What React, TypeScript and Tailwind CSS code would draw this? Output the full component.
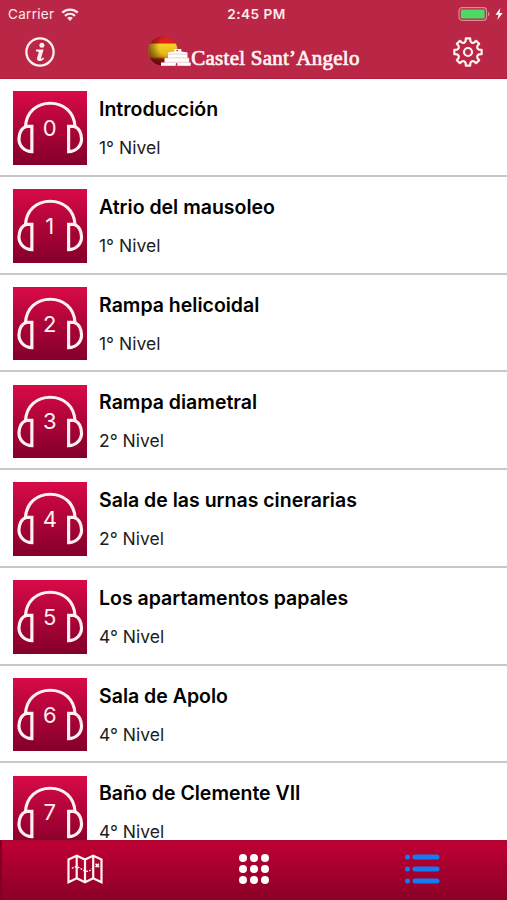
const stops = [
  { title: 'Introducción', level: '1° Nivel' },
  { title: 'Atrio del mausoleo', level: '1° Nivel' },
  { title: 'Rampa helicoidal', level: '1° Nivel' },
  { title: 'Rampa diametral', level: '2° Nivel' },
  { title: 'Sala de las urnas cinerarias', level: '2° Nivel' },
  { title: 'Los apartamentos papales', level: '4° Nivel' },
  { title: 'Sala de Apolo', level: '4° Nivel' },
  { title: 'Baño de Clemente VII', level: '4° Nivel' },
];

// Eight-toothed gear outline, centred on 16,16
function gearPath() {
  const point = (radius: number, degrees: number) => {
    const a = (degrees * Math.PI) / 180;
    return `${(16 + radius * Math.sin(a)).toFixed(2)} ${(16 - radius * Math.cos(a)).toFixed(2)}`;
  };
  let d = `M${point(13.8, -9)}`;
  for (let a = 0; a < 360; a += 45) {
    d += `L${point(13.8, a + 9)}L${point(11.4, a + 12)}Q${point(8.9, a + 22.5)} ${point(11.4, a + 33)}L${point(13.8, a + 36)}`;
  }
  return `${d}Z`;
}

function StatusBar() {
  return (
    <div className="grid h-7 grid-cols-3 items-center pl-2 pr-1 text-[13.5px] text-[#ffe9ec]">
      <div className="flex items-center gap-[7px]">
        <span className="tracking-[0.3px]">Carrier</span>
        <svg viewBox="0 0 18 13" className="h-[13px] w-[18px]" fill="none" stroke="currentColor" strokeWidth="2.3">
          <path d="M1.2 4.7C5.7.5 12.3.5 16.8 4.7" />
          <path d="M4 7.9c3-2.7 7-2.7 10 0" />
          <path d="M6.2 9.9c1.8-1.5 3.8-1.5 5.6 0L9 12.9z" fill="currentColor" stroke="none" />
        </svg>
      </div>
      <span className="pl-0.5 pt-px text-center text-[13.6px] font-semibold tracking-[0.5px]">2:45 PM</span>
      <div className="flex items-center justify-end gap-1">
        <svg viewBox="0 0 33 14" className="h-[14px] w-[33px]" fill="none">
          <rect x="1" y=".7" width="27.5" height="12.6" rx="3" stroke="#dc899a" strokeWidth="1.2" />
          <rect x="2.8" y="2.5" width="23.9" height="9" rx="1.2" fill="#4cd964" />
          <path d="M30 4.8c2 .8 2 3.6 0 4.4z" fill="#dc899a" />
        </svg>
        <svg viewBox="0 0 8 12" className="h-3 w-2" fill="#fff">
          <path d="M5.4 0 .5 6.7h3L2.4 12l5.2-7.1H4.5z" />
        </svg>
      </div>
    </div>
  );
}

function Logo() {
  return (
    <div className="flex items-center">
      <svg viewBox="0 0 44 34" className="h-[34px] w-11">
        <defs>
          <linearGradient id="flag" x1="0" y1="0" x2="0" y2="1">
            <stop offset="0" stopColor="#e3201f" />
            <stop offset=".23" stopColor="#d9251b" />
            <stop offset=".27" stopColor="#f7d128" />
            <stop offset=".7" stopColor="#e2b015" />
            <stop offset=".78" stopColor="#b91a12" />
            <stop offset="1" stopColor="#8d1010" />
          </linearGradient>
          <radialGradient id="shade" cx=".64" cy=".36" r=".7">
            <stop offset=".4" stopColor="#000" stopOpacity="0" />
            <stop offset="1" stopColor="#3c0805" stopOpacity=".65" />
          </radialGradient>
        </defs>
        <circle cx="15" cy="14.9" r="14.7" fill="url(#flag)" />
        <circle cx="15" cy="14.9" r="14.7" fill="url(#shade)" />
        <g fill="#fff">
          <path d="M13 26.5h29.700v3.300H13z" />
          <path d="M16.500 21.800h24.700V27H16.500z" />
          <path d="M20 16.500l6.500-1v-2.500h6.800v2.500l6.200 1V23H20z" />
        </g>
        <path d="M20 18.500c6-.8 13-.8 19.500 0M17 22.300c8-.7 16-.7 24 0M14 26.300h28" stroke="#dd9aa8" strokeWidth=".5" fill="none" />
        <path d="M27.800 29.800V28c0-1.300 1.600-1.300 1.600 0v1.800zM28.500 15.300v-1.200h1.500v1.200z" fill="#ba2746" />
      </svg>
      <span className="-ml-px mt-[9px] whitespace-nowrap font-['Liberation_Serif',serif] text-[21px] leading-6 tracking-[0.25px] text-[#fff3f3] [-webkit-text-stroke:0.7px_#fff3f3]">
        Castel Sant’Angelo
      </span>
    </div>
  );
}

function Header() {
  return (
    <header className="h-[79px] shrink-0 border-b border-[#b01b3b] bg-[#ba2746]">
      <StatusBar />
      <div className="flex h-[50px] items-center justify-between pl-6 pr-[23px]">
        <svg viewBox="0 0 32 32" className="mb-0.5 h-8 w-8" fill="none">
          <circle cx="16" cy="16" r="13.6" stroke="#fff0f0" strokeWidth="2.3" />
          <circle cx="17.9" cy="9.2" r="2.5" fill="#fff0f0" />
          <path
            d="M12 13.600h7.600l-2.500 8.500c-.3 1 .3 1 1 .2l1-.9 1.100 1c-2.600 3.600-8.300 3.800-7-.8l1.500-5.200c.2-.7-.3-1-2.700-1z"
            fill="#fff0f0"
          />
        </svg>
        <Logo />
        <svg
          viewBox="0 0 32 32"
          className="mb-0.5 h-8 w-8"
          fill="none"
          stroke="#fff0f0"
          strokeWidth="2.2"
          strokeLinejoin="round"
        >
          <circle cx="16" cy="16" r="4" />
          <path d={gearPath()} />
        </svg>
      </div>
    </header>
  );
}

function AudioTile({ number }: { number: number }) {
  return (
    <div className="grid h-[73.5px] w-[73.5px] shrink-0 place-items-center bg-linear-to-b from-[#d90b47] to-[#84002a]">
      <svg
        viewBox="0 0 74 74"
        className="col-start-1 row-start-1 h-full w-full"
        fill="none"
        stroke="#fff0f1"
        strokeWidth="3.2"
      >
        <path d="M12.500 36C13.500 21 24 12.300 37.500 12.300S61.500 21 62.500 36" />
        <path d="M19 35.700h-5.500C8.300 37 6 43 6 48.300c0 7 5.500 12.700 13 12.700z" />
        <path d="M56 35.700h5.500C66.700 37 69 43 69 48.300c0 7-5.500 12.700-13 12.700z" />
      </svg>
      <span className="col-start-1 row-start-1 text-[22px] leading-none text-[#ffeff1]">
        {number}
      </span>
    </div>
  );
}

function TabBar() {
  return (
    <nav className="grid h-[60px] shrink-0 grid-cols-3 items-center border-l-2 border-t border-l-[#820026] border-t-[#a10b32] bg-linear-to-b from-[#c00034] to-[#8b0027] pb-[3px]">
      <svg
        viewBox="0 0 36 30"
        className="mr-[3px] h-[30px] w-9 justify-self-center"
        fill="none"
        stroke="#fff3f4"
        strokeWidth="2.2"
      >
        <path d="M1.5 5.5 9.7 1.800 18 5.500l8.200-3.700 8.300 3.700v22.700l-8.300-4-8.200 4-8.300-4-8.200 4zM9.700 1.800v22.400M18 5.500v22.700M26.200 1.800v22.400" />
        <path d="M5 14.500c4-4 8 0 12 2s7 0 10-4" strokeWidth="1.400" strokeDasharray="1.800 1.300" />
        <path d="m28.600 9.700 3.400 3.400m0-3.400-3.400 3.400" strokeWidth="1.600" />
      </svg>
      <svg viewBox="0 0 30 30" className="h-[30px] w-[30px] justify-self-center" fill="#fff">
        {[4, 15, 26].map((y) =>
          [4, 15, 26].map((x) => <circle key={`${x}-${y}`} cx={x} cy={y} r="4" />)
        )}
      </svg>
      <svg
        viewBox="0 0 36 32"
        className="mr-0.5 h-8 w-9 justify-self-center"
        stroke="#147bf3"
        strokeWidth="5"
        strokeLinecap="round"
      >
        <path d="M3.500 4h.01M3.500 16h.01M3.500 28h.01M11 4h22M11 16h22M11 28h22" />
      </svg>
    </nav>
  );
}

export default function App() {
  return (
    <div className="flex h-[900px] w-[507px] flex-col overflow-hidden bg-white font-[Inter,sans-serif]">
      <Header />
      <main className="min-h-0 flex-1 overflow-hidden">
        {stops.map((stop, i) => (
          <div
            key={stop.title}
            className="flex h-[97.75px] gap-[12.5px] border-b-2 border-[#c8c8c8] pl-[13px] pt-[12.3px]"
          >
            <AudioTile number={i} />
            <div className="pt-[4.8px]">
              <h2 className="text-[19.5px] font-semibold leading-[26px] text-black">{stop.title}</h2>
              <p className="mt-[14px] text-[17.5px] leading-6 text-[#1c1c1c]">{stop.level}</p>
            </div>
          </div>
        ))}
      </main>
      <TabBar />
    </div>
  );
}
